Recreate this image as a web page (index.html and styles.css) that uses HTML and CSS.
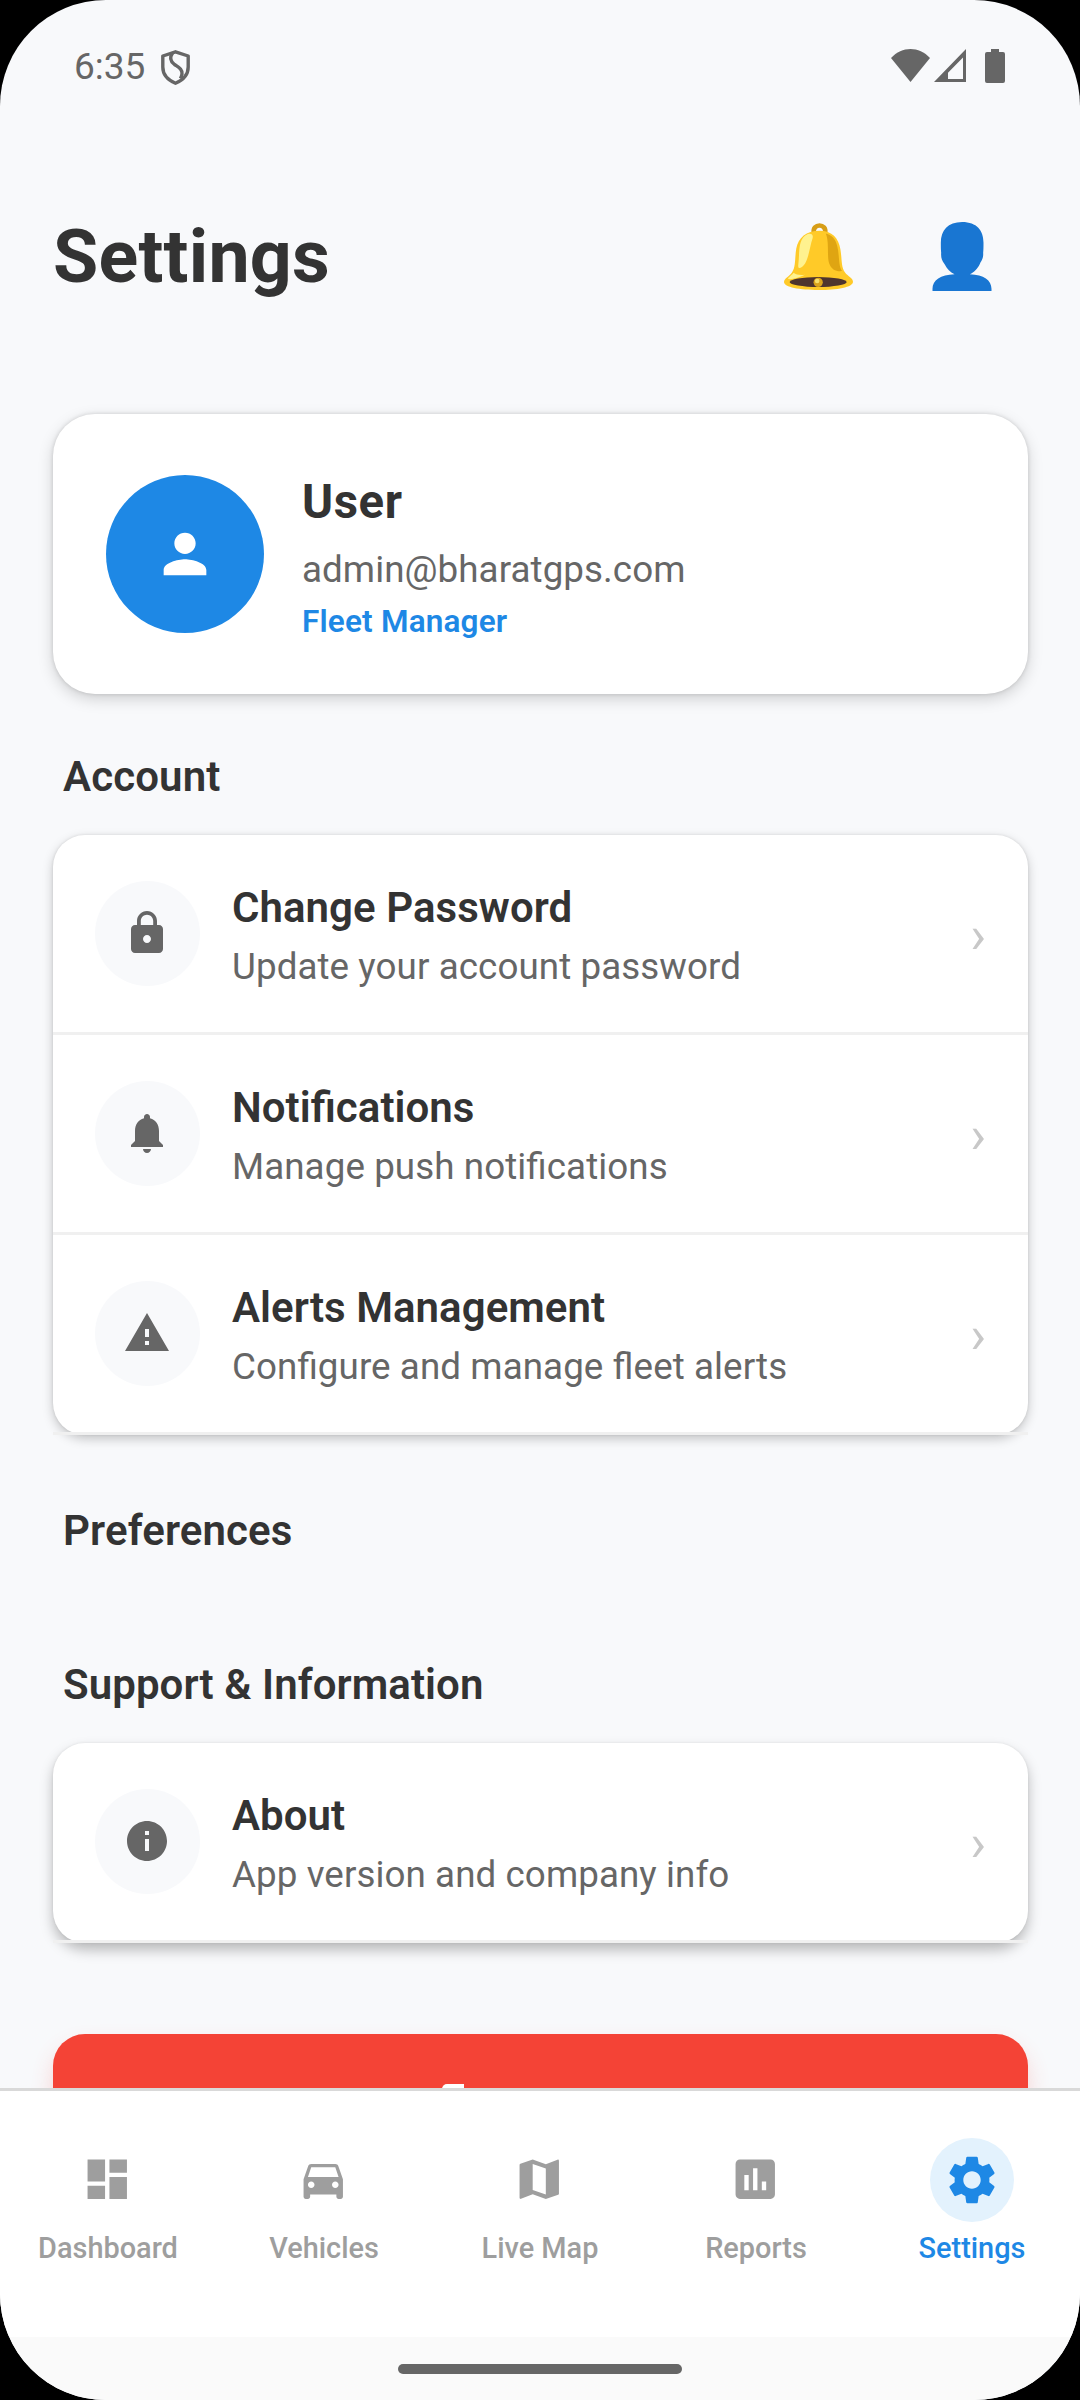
FILE: index.html
```html
<!DOCTYPE html>
<html lang="en">
<head>
<meta charset="utf-8">
<title>Settings</title>
<link rel="stylesheet" href="styles.css">
</head>
<body>
<div class="screen">
  <div class="status">
    <div class="status-left">
      <span class="clock">6:35</span>
      <svg class="shield" viewBox="0 0 29 35" fill="none" stroke="#666" stroke-width="3.400" stroke-linejoin="round"><path d="M14.500 1.800 27.200 6V17c0 7.500-5 13-12.700 16.200C6.800 30 1.800 24.500 1.800 17V6z"/><path d="M11.500 3C8.500 7.500 9.500 11.500 13.500 14.500c4 2.800 8 4.500 7.500 9.500-.2 2-.8 3-1.600 4.500"/></svg>
    </div>
    <div class="status-right">
      <svg class="wifi" viewBox="0 0 39 33" fill="#666"><path d="M0 9C11-3 28-3 39 9L19.500 33z"/></svg>
      <svg class="signal" viewBox="0 0 32 33" fill="#666" fill-rule="evenodd"><path d="M32 0V33H0zM29 8.500 14 23.700V30H29z"/></svg>
      <svg class="battery" viewBox="0 0 20 34" fill="#666"><path d="M6 0h8v3h4a2 2 0 0 1 2 2v27a2 2 0 0 1-2 2H2a2 2 0 0 1-2-2V5a2 2 0 0 1 2-2h4z"/></svg>
    </div>
  </div>

  <header class="header">
    <h1 class="title">Settings</h1>
    <div class="header-actions">
      <svg class="bell" viewBox="0 0 208 202">
        <path fill="none" stroke="#d79e17" stroke-width="14" d="M90 30c-6-30 40-30 34 0"/>
        <path fill="#ffca28" d="M107 23c38 0 58 22 63 56 5 30 2 54 14 70 9 12 24 16 24 28 0 17-48 25-104 25S0 194 0 178c0-11 15-16 24-29 12-17 8-42 13-72 6-33 30-54 70-54z"/>
        <path fill="#dfa512" d="M126 32c24 6 33 24 37 50 4 28 2 48 12 63-18 2-32-5-39-24-7-22 1-62-10-89z"/>
        <path fill="#fff28f" d="M72 33c12-3 17 4 14 14-9 25-12 72-32 86-9 6-12 2-11-6 5-37-3-81 29-94z"/>
        <path fill="#fff28f" d="M29 150c7 6 20 8 34 6-13 7-39 15-49 13-6-2 5-7 15-19z"/>
        <ellipse cx="103" cy="178" rx="86" ry="15" fill="#4e342e"/>
        <circle cx="103" cy="179" r="14" fill="#dba31b"/>
        <circle cx="100" cy="175" r="7" fill="#f8df68"/>
      </svg>
      <svg class="person" viewBox="0 0 177 207" fill="#1976d2"><path d="M89 0c44 0 64 26 64 62 0 14 0 20-1 30 1 18-4 22-10 34-8 16-17 24-30 31 42 1 65 19 65 43v7H0v-7c0-24 24-42 66-43-13-7-22-16-30-31-8-11-11-18-10-34-1-10-1-16-1-30C25 26 46 0 89 0z"/></svg>
    </div>
  </header>

  <main class="content">
    <section class="profile">
      <div class="avatar"><svg viewBox="0 0 24 24"><path d="M12 12c2.210 0 4-1.790 4-4s-1.790-4-4-4-4 1.790-4 4 1.790 4 4 4zm0 2c-2.670 0-8 1.340-8 4v2h16v-2c0-2.660-5.330-4-8-4z"/></svg></div>
      <div class="profile-text">
        <div class="name">User</div>
        <div class="email">admin@bharatgps.com</div>
        <div class="role">Fleet Manager</div>
      </div>
    </section>

    <h2 class="section first">Account</h2>
    <section class="list">
      <div class="row">
        <div class="row-icon"><svg viewBox="0 0 24 24"><path d="M18 8h-1V6c0-2.760-2.240-5-5-5S7 3.240 7 6v2H6c-1.100 0-2 .9-2 2v10c0 1.100.9 2 2 2h12c1.100 0 2-.9 2-2V10c0-1.100-.9-2-2-2zm-6 9c-1.100 0-2-.9-2-2s.9-2 2-2 2 .9 2 2-.9 2-2 2zm3.100-9H8.900V6c0-1.710 1.390-3.100 3.100-3.100s3.100 1.390 3.100 3.100v2z"/></svg></div>
        <div class="row-text"><div class="row-title">Change Password</div><div class="row-sub">Update your account password</div></div>
        <span class="chevron">›</span>
      </div>
      <div class="row">
        <div class="row-icon"><svg viewBox="0 0 24 24"><path d="M12 22c1.100 0 2-.9 2-2h-4c0 1.100.89 2 2 2zm6-6v-5c0-3.070-1.640-5.640-4.500-6.320V4c0-.83-.67-1.500-1.500-1.500s-1.500.67-1.500 1.500v.68C7.630 5.360 6 7.920 6 11v5l-2 2v1h16v-1l-2-2z"/></svg></div>
        <div class="row-text"><div class="row-title">Notifications</div><div class="row-sub">Manage push notifications</div></div>
        <span class="chevron">›</span>
      </div>
      <div class="row">
        <div class="row-icon"><svg viewBox="0 0 24 24"><path d="M1 21h22L12 2 1 21zm12-3h-2v-2h2v2zm0-4h-2v-4h2v4z"/></svg></div>
        <div class="row-text"><div class="row-title">Alerts Management</div><div class="row-sub">Configure and manage fleet alerts</div></div>
        <span class="chevron">›</span>
      </div>
    </section>

    <h2 class="section prefs">Preferences</h2>
    <h2 class="section support">Support &amp; Information</h2>
    <section class="list deep">
      <div class="row">
        <div class="row-icon"><svg viewBox="0 0 24 24"><path d="M12 2C6.480 2 2 6.480 2 12s4.480 10 10 10 10-4.480 10-10S17.520 2 12 2zm1 15h-2v-6h2v6zm0-8h-2V7h2v2z"/></svg></div>
        <div class="row-text"><div class="row-title">About</div><div class="row-sub">App version and company info</div></div>
        <span class="chevron">›</span>
      </div>
    </section>

    <div class="logout"><span class="logout-icon"></span></div>
  </main>

  <nav class="tabs">
    <div class="tab"><div class="tab-icon"><svg viewBox="0 0 24 24"><path d="M3 13h8V3H3v10zm0 8h8v-6H3v6zm10 0h8V11h-8v10zm0-18v6h8V3h-8z"/></svg></div>Dashboard</div>
    <div class="tab"><div class="tab-icon"><svg viewBox="0 0 24 24"><path d="M18.920 6.010C18.720 5.420 18.160 5 17.500 5h-11c-.66 0-1.210.42-1.420 1.010L3 12v8c0 .55.450 1 1 1h1c.55 0 1-.45 1-1v-1h12v1c0 .55.450 1 1 1h1c.55 0 1-.45 1-1v-8l-2.080-5.990zM6.500 16c-.83 0-1.500-.67-1.500-1.500S5.670 13 6.500 13s1.500.67 1.500 1.500S7.330 16 6.500 16zm11 0c-.83 0-1.500-.67-1.500-1.500s.67-1.500 1.500-1.500 1.500.67 1.500 1.500-.67 1.500-1.500 1.500zM5 11l1.500-4.500h11L19 11H5z"/></svg></div>Vehicles</div>
    <div class="tab"><div class="tab-icon"><svg viewBox="0 0 24 24"><path d="M20.500 3l-.16.030L15 5.100 9 3 3.360 4.900c-.21.070-.36.250-.36.480V20.500c0 .28.220.5.500.5l.16-.03L9 18.900l6 2.100 5.640-1.900c.21-.07.360-.25.360-.48V3.500c0-.28-.22-.5-.5-.5zM15 19l-6-2.110V5l6 2.110V19z"/></svg></div>Live Map</div>
    <div class="tab"><div class="tab-icon"><svg viewBox="0 0 24 24"><path d="M19 3H5c-1.100 0-2 .9-2 2v14c0 1.100.9 2 2 2h14c1.100 0 2-.9 2-2V5c0-1.100-.9-2-2-2zM9 17H7v-7h2v7zm4 0h-2V7h2v10zm4 0h-2v-4h2v4z"/></svg></div>Reports</div>
    <div class="tab active"><div class="tab-icon"><svg viewBox="0 0 24 24"><path d="M19.140 12.940c.04-.3.060-.61.060-.94 0-.32-.02-.64-.07-.94l2.030-1.580c.18-.14.230-.41.120-.61l-1.920-3.320c-.12-.22-.37-.29-.59-.22l-2.390.96c-.5-.38-1.030-.7-1.620-.94l-.36-2.540c-.04-.24-.24-.41-.48-.41h-3.840c-.24 0-.43.170-.47.410l-.36 2.540c-.59.240-1.130.57-1.620.94l-2.390-.96c-.22-.08-.47 0-.59.220L2.740 8.870c-.12.210-.08.470.12.610l2.030 1.580c-.05.3-.09.630-.09.940s.02.640.07.940l-2.030 1.580c-.18.140-.23.410-.12.610l1.920 3.320c.12.220.37.290.59.220l2.390-.96c.5.380 1.030.7 1.620.94l.36 2.540c.05.240.24.410.48.410h3.840c.24 0 .44-.17.470-.41l.36-2.540c.59-.24 1.130-.56 1.620-.94l2.390.96c.22.080.47 0 .59-.22l1.920-3.320c.12-.22.070-.47-.12-.61l-2.010-1.580zM12 15.600c-1.980 0-3.600-1.620-3.600-3.600s1.620-3.600 3.600-3.600 3.600 1.620 3.600 3.600-1.620 3.600-3.600 3.600z"/></svg></div>Settings</div>
  </nav>
  <div class="gesture"><div class="handle"></div></div>
</div>
</body>
</html>
```
FILE: styles.css
```css
* { box-sizing: border-box; }
body { margin: 0; background: #000; font-family: Roboto, "Noto Sans", sans-serif; font-feature-settings: "liga" 1; color: #333; }
svg { display: block; flex: none; }

.screen { width: 1080px; height: 2400px; border-radius: 106px; overflow: hidden; background: #f8f9fb; display: flex; flex-direction: column; }

.status { height: 134px; flex: none; padding: 0 75px 0 74px; display: flex; justify-content: space-between; }
.status-left, .status-right { display: flex; align-items: flex-start; }
.clock { font-size: 37px; line-height: 44px; margin-top: 45px; color: #666; width: 87px; }
.shield { width: 29px; height: 35px; margin-top: 50px; }
.wifi { width: 39px; height: 33px; margin: 49px 4px 0 0; }
.signal { width: 32px; height: 33px; margin: 49px 19px 0 0; }
.battery { width: 20px; height: 34px; margin-top: 49px; }

.header { height: 250px; flex: none; padding: 80px 88px 0 53px; display: flex; justify-content: space-between; }
.title { margin: 0; font-size: 73.5px; line-height: 86px; font-weight: 700; letter-spacing: .25px; }
.header-actions { display: flex; gap: 79px; padding-top: 8px; }
.bell { width: 69px; height: 67px; margin-top: 1px; }
.person { width: 60px; height: 69px; }

.content { flex: none; height: 1704px; overflow: hidden; padding: 30px 52px 0 53px; }
.profile { height: 280px; border-radius: 42px; background: #fff; padding: 0 53px; display: flex; align-items: center; gap: 38px; box-shadow: 0 5px 15px rgba(0,0,0,.17), 0 0 4px rgba(0,0,0,.14); }
.avatar { width: 158px; height: 158px; border-radius: 50%; background: #1e88e5; display: grid; place-items: center; }
.avatar svg { width: 64px; height: 64px; fill: #fff; }
.profile-text { padding-top: 6px; }
.name { font-size: 47.25px; line-height: 55px; font-weight: 700; letter-spacing: .6px; }
.email { font-size: 36.75px; line-height: 43px; margin-top: 18px; color: #666; letter-spacing: .07px; }
.role { font-size: 31.5px; line-height: 37px; margin-top: 12px; font-weight: 600; letter-spacing: .18px; color: #1e88e5; }

.section { margin: 0 0 0 10px; font-size: 42px; line-height: 49px; font-weight: 600; letter-spacing: .12px; }
.first { padding-top: 58px; height: 141px; }
.prefs { padding-top: 71px; }
.support { padding-top: 105px; height: 188px; letter-spacing: .06px; }

.list { border-radius: 32px; background: #fff; box-shadow: 0 4px 11px rgba(0,0,0,.21), 0 0 3px rgba(0,0,0,.1); }
.deep { box-shadow: 0 7px 13px rgba(0,0,0,.26), 0 0 3px rgba(0,0,0,.08); }
.row { height: 200px; border-bottom: 3px solid #f0f0f0; padding: 0 42px; display: flex; align-items: center; }
.row-icon { width: 105px; height: 105px; border-radius: 50%; background: #f8f9fb; display: grid; place-items: center; margin-right: 32px; padding: 0 1px 1px 0; }
.row-icon svg { width: 48px; height: 48px; fill: #666; }
.row-text { flex: 1; padding-top: 4px; }
.row-title { font-size: 42px; line-height: 49px; font-weight: 600; letter-spacing: .05px; }
.row-sub { font-size: 36.75px; line-height: 43px; margin-top: 13px; color: #666; letter-spacing: .08px; }
.chevron { font-size: 52.5px; line-height: 62px; padding-top: 3px; color: #c8c8c8; font-weight: 400; }

.logout { margin-top: 91px; height: 147px; border-radius: 32px; background: #f44336; box-shadow: 0 12px 22px rgba(244,67,54,.2); display: flex; padding: 50px 0 0 389px; }
.logout-icon { width: 22px; height: 20px; background: #fff; border-radius: 5px 0 0 0; }

.tabs { height: 249px; flex: none; background: #fff; border-top: 3px solid #d9d9d9; display: flex; }
.tab { width: 216px; padding-top: 47px; display: flex; flex-direction: column; align-items: center; font-size: 28.9px; line-height: 34px; font-weight: 500; color: #9e9e9e; }
.tab-icon { width: 84px; height: 84px; border-radius: 50%; display: grid; place-items: center; margin-bottom: 9px; padding: 0 1.5px 1.5px 0; }
.tab-icon svg { width: 52.5px; height: 52.5px; fill: #9e9e9e; }
.active { color: #1e88e5; }
.active .tab-icon { background: #e3f2fd; padding: 0; }
.active .tab-icon svg { width: 58px; height: 58px; fill: #1e88e5; }

.gesture { flex: 1; background: #fafafa; display: flex; justify-content: center; padding-top: 27px; }
.handle { width: 284px; height: 10px; border-radius: 5px; background: #666; }
```
